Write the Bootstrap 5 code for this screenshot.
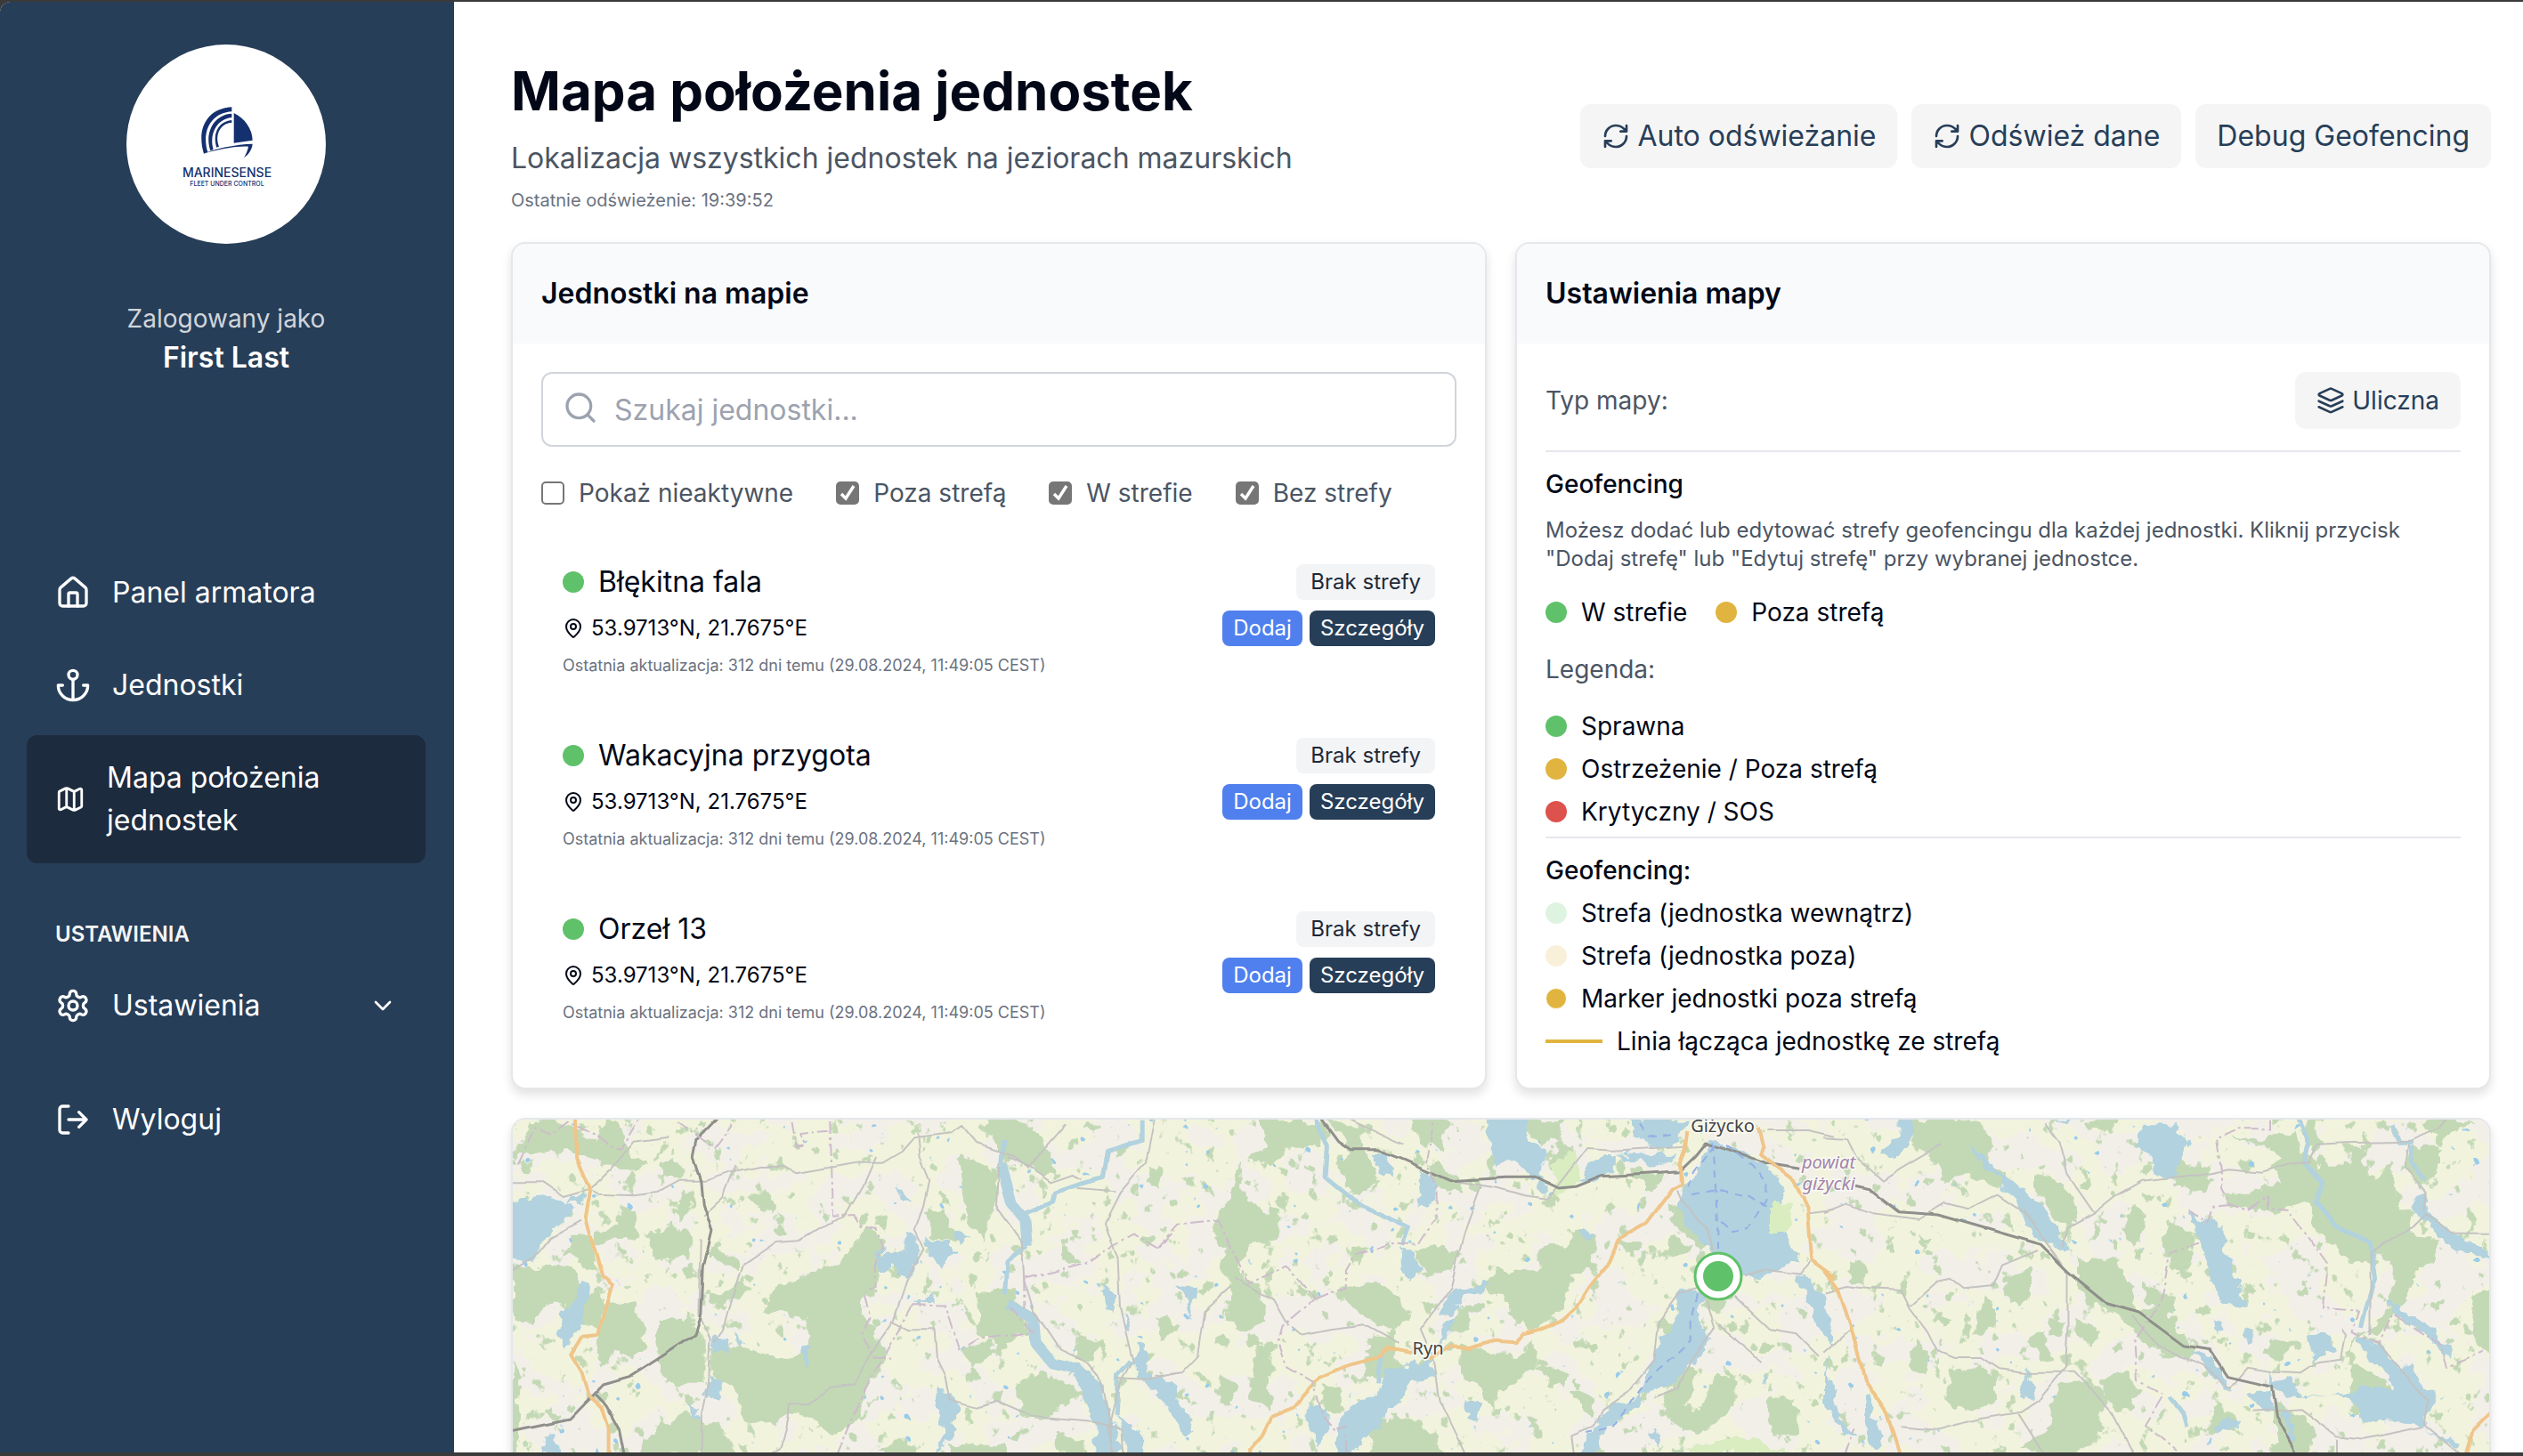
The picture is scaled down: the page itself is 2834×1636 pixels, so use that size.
<!DOCTYPE html>
<html lang="pl">
<head>
<meta charset="utf-8">
<meta name="viewport" content="width=device-width, initial-scale=1">
<title>Mapa położenia jednostek</title>
<link href="https://cdn.jsdelivr.net/npm/bootstrap@5.3.0/dist/css/bootstrap.min.css" rel="stylesheet">
<style>
:root{--navy:#273e58;--navy-dark:#1d2b3e;--ink:#020817;--slate:#4b5563;--line:#e5e7eb;--ok:#5fc169;--warn:#e0b43f;--crit:#dd524c}
html{font-size:32px}
body{font-family:Inter,"Liberation Sans",sans-serif;color:var(--ink);background:#3a3a3a;padding:2px 0 4px;height:100vh;overflow:hidden}
.app-window{height:100%;background:#fff;border-top-left-radius:12px;overflow:hidden}
svg.ico{fill:none;stroke:currentColor;stroke-width:2;stroke-linecap:round;stroke-linejoin:round;flex-shrink:0}
.side{width:510px;flex-shrink:0;background:var(--navy);color:#fff;padding:48px 32px 0 30px}
.avatar{width:224px;height:224px;margin-bottom:64px}
.fs-sm{font-size:28px;line-height:40px}
.fs-xs{font-size:24px;line-height:32px}
.muted-light{color:#d1d5db}
.side-nav{margin-top:192px}
.side-nav .nav-link{color:#fff;background:none;border:0;padding:24px 32px;border-radius:12px;gap:24px;line-height:48px;text-align:left}
.side-nav .nav-link.active{background:var(--navy-dark)}
.side-head{font-size:24px;line-height:32px;font-weight:600;padding:0 32px;margin:64px 0 16px;color:#f5f5f5}
.main-pane{padding:64px 36px 0 64px;min-width:0}
.page-title{font-size:60px;line-height:72px;font-weight:700;margin:0 0 16px}
.slate{color:var(--slate)}
.stamp{font-size:20px;line-height:30px;color:#6b7280}
.btn-soft{--bs-btn-bg:#f5f5f5;--bs-btn-color:var(--navy);--bs-btn-hover-bg:#e9e9e9;--bs-btn-border-width:0;--bs-btn-border-radius:12px;--bs-btn-padding-x:24px;--bs-btn-padding-y:12px;--bs-btn-font-size:32px;--bs-btn-line-height:48px}
.btn-soft.compact{--bs-btn-font-size:28px;--bs-btn-line-height:40px}
.panel-row{--bs-gutter-x:32px;--bs-gutter-y:32px;margin-top:0}
.panel-row > :not(:last-child){margin-top:0}
.panel{border:2px solid var(--line);border-radius:16px;box-shadow:0 6px 12px rgba(0,0,0,.12);overflow:hidden;background:#fff}
.panel-head{background:#f9fafc;padding:32px;font-size:32px;line-height:48px;font-weight:600;margin:0}
.search-ico{left:24px;top:20px;color:#9ca3af}
.search-box{height:84px;border:2px solid #d1d5db;border-radius:12px;padding:0 24px 0 80px;font-size:32px}
.search-box::placeholder{color:#9ca3af}
.filters{gap:48px}
.filters .form-check-input{width:26px;height:26px;border:2px solid #767676;border-radius:5px}
.filters .form-check-input:checked{background-color:#767676;background-size:22px 22px;background-image:url("data:image/svg+xml,%3Csvg xmlns='http://www.w3.org/2000/svg' viewBox='0 0 22 22'%3E%3Cpath d='M4 12l5 5 9-14' fill='none' stroke='white' stroke-width='3.4'/%3E%3C/svg%3E")}
.unit{padding:24px}
.unit-name{line-height:48px}
.unit-time{font-size:18px;line-height:27px;color:#6b7280}
.dot{width:24px;height:24px;border-radius:50%;flex-shrink:0;display:inline-block}
.ok{background:var(--ok)}.warn{background:var(--warn)}.crit{background:var(--crit)}
.ok-soft{background:#dff3e1}.warn-soft{background:#f9f0d9}
.ringed{border:1px solid #fff}
.link-line{width:64px;height:4px;background:var(--warn)}
.zone-tag{background:#f3f4f6;color:#1f2937;border-radius:8px;padding:4px 16px}
.btn-mini{--bs-btn-font-size:24px;--bs-btn-line-height:32px;--bs-btn-padding-x:12px;--bs-btn-padding-y:4px;--bs-btn-border-width:0;--bs-btn-border-radius:8px;--bs-btn-color:#fff;--bs-btn-hover-color:#fff}
.btn-add{--bs-btn-bg:#4f80ee;--bs-btn-hover-bg:#3b6fe0}
.btn-more{--bs-btn-bg:var(--navy);--bs-btn-hover-bg:var(--navy-dark)}
.ruled{border-top:2px solid var(--line);padding-top:16px}
.sub-title{font-weight:500}
.section-gap + .section-gap{margin-top:24px}
.map-box svg{width:100%;height:800px;display:block}
.map-box .fo{fill:#c3d9b5}.map-box .wa{fill:#b1d2de}
.map-box .lm{fill:#d9edc0}
.map-box .l path{fill:none;vector-effect:non-scaling-stroke;stroke-linejoin:round}
.map-box .l .rv{stroke:#b1d2de;stroke-width:5}.map-box .l .rw{stroke:#b1d2de;stroke-width:12}
.map-box .l .rd{stroke:#c4c3c1;stroke-width:2}.map-box .l .rl{stroke:#8f8f8b;stroke-width:3}
.map-box .l .or{stroke:#f0c589;stroke-width:4}
.map-box .l .bo{stroke:#cdbccb;stroke-width:2;stroke-dasharray:14 4 3 4}
.map-box .l .fe{stroke:#94aee6;stroke-width:2;stroke-dasharray:9 7}
.map-box text{font-family:"Noto Sans",sans-serif;font-size:20px;text-anchor:middle;stroke:#fff;stroke-width:3;stroke-opacity:.7;paint-order:stroke}
</style>
<script src="https://cdn.jsdelivr.net/npm/bootstrap@5.3.0/dist/js/bootstrap.bundle.min.js"></script>
</head>
<body>
<svg width="0" height="0" class="position-absolute" aria-hidden="true">
<symbol id="i-refresh" viewBox="0 0 24 24"><path d="M3 12a9 9 0 0 1 9-9 9.75 9.75 0 0 1 6.74 2.74L21 8M21 3v5h-5M21 12a9 9 0 0 1-9 9 9.75 9.75 0 0 1-6.74-2.74L3 16M8 16H3v5"/></symbol>
<symbol id="i-pin" viewBox="0 0 24 24"><path d="M20 10c0 4.993-5.539 10.193-7.399 11.799a1 1 0 0 1-1.202 0C9.539 20.193 4 14.993 4 10a8 8 0 0 1 16 0"/><circle cx="12" cy="10" r="3"/></symbol>
</svg>
<div class="app-window d-flex">
<aside class="side">
  <div class="text-center">
    <svg class="avatar" viewBox="0 0 224 224" role="img" aria-label="MarineSense">
      <circle cx="112" cy="112" r="112" fill="#fff"/>
      <g transform="translate(-142 -50) scale(.33333)" fill="#15306f">
        <path d="M781 361v15C712 380 678 442 700 513l-13 5C660 430 702 364 781 361z"/>
        <path d="M781 383v13C733 399 703 450 719 504l-10 4C688 446 722 386 781 383z"/>
        <path d="M781 405v8C743 416 722 454 738 494l-8 3C714 448 739 408 781 405z"/>
        <path d="M788 381c37 17 62 54 63 92l-63 9z"/>
        <path d="M688 517c52-19 112-31 163-32-2 20-13 35-29 47 8-14 13-26 15-38-48-2-98 10-149 23z"/>
      </g>
      <g fill="#15306f" text-anchor="middle" font-family="Inter,sans-serif">
        <text x="113" y="149" font-size="14" font-weight="500">MARINESENSE</text>
        <text x="113" y="159" font-size="7" font-weight="500">FLEET UNDER CONTROL</text>
      </g>
    </svg>
    <div class="fs-sm muted-light">Zalogowany jako</div>
    <div class="fw-semibold">First Last</div>
  </div>
  <nav class="side-nav nav flex-column">
    <a class="nav-link d-flex align-items-center mb-1" href="#"><svg class="ico" width="40" height="40" viewBox="0 0 24 24"><path d="M15 21v-8a1 1 0 0 0-1-1h-4a1 1 0 0 0-1 1v8"/><path d="M3 10a2 2 0 0 1 .709-1.528l7-5.999a2 2 0 0 1 2.582 0l7 5.999A2 2 0 0 1 21 10v9a2 2 0 0 1-2 2H5a2 2 0 0 1-2-2z"/></svg>Panel armatora</a>
    <a class="nav-link d-flex align-items-center mb-1" href="#"><svg class="ico" width="40" height="40" viewBox="0 0 24 24"><path d="M12 22V8M5 12H2a10 10 0 0 0 20 0h-3"/><circle cx="12" cy="5" r="3"/></svg>Jednostki</a>
    <a class="nav-link active d-flex align-items-center" href="#" aria-current="page"><svg class="ico" width="34" height="34" viewBox="0 0 24 24"><path d="M14.106 5.553a2 2 0 0 0 1.788 0l3.659-1.83A1 1 0 0 1 21 4.619v12.764a1 1 0 0 1-.553.894l-4.553 2.277a2 2 0 0 1-1.788 0l-4.212-2.106a2 2 0 0 0-1.788 0l-3.659 1.83A1 1 0 0 1 3 19.381V6.618a1 1 0 0 1 .553-.894l4.553-2.277a2 2 0 0 1 1.788 0zM15 5.764v15M9 3.236v15"/></svg>Mapa położenia jednostek</a>
    <h2 class="side-head">USTAWIENIA</h2>
    <button type="button" class="nav-link d-flex align-items-center mb-3"><svg class="ico" width="40" height="40" viewBox="0 0 24 24"><path d="M12.22 2h-.44a2 2 0 0 0-2 2v.18a2 2 0 0 1-1 1.73l-.43.25a2 2 0 0 1-2 0l-.15-.08a2 2 0 0 0-2.73.73l-.22.38a2 2 0 0 0 .73 2.73l.15.1a2 2 0 0 1 1 1.72v.51a2 2 0 0 1-1 1.74l-.15.09a2 2 0 0 0-.73 2.73l.22.38a2 2 0 0 0 2.73.73l.15-.08a2 2 0 0 1 2 0l.43.25a2 2 0 0 1 1 1.73V20a2 2 0 0 0 2 2h.44a2 2 0 0 0 2-2v-.18a2 2 0 0 1 1-1.73l.43-.25a2 2 0 0 1 2 0l.15.08a2 2 0 0 0 2.73-.73l.22-.39a2 2 0 0 0-.73-2.73l-.15-.08a2 2 0 0 1-1-1.74v-.5a2 2 0 0 1 1-1.74l.15-.09a2 2 0 0 0 .73-2.73l-.22-.38a2 2 0 0 0-2.73-.73l-.15.08a2 2 0 0 1-2 0l-.43-.25a2 2 0 0 1-1-1.73V4a2 2 0 0 0-2-2z"/><circle cx="12" cy="12" r="3"/></svg><span class="flex-grow-1">Ustawienia</span><svg class="ico" width="32" height="32" viewBox="0 0 24 24"><path d="m6 9 6 6 6-6"/></svg></button>
    <button type="button" class="nav-link d-flex align-items-center"><svg class="ico" width="40" height="40" viewBox="0 0 24 24"><path d="M9 21H5a2 2 0 0 1-2-2V5a2 2 0 0 1 2-2h4M16 17l5-5-5-5M21 12H9"/></svg>Wyloguj</button>
  </nav>
</aside>
<main class="main-pane flex-grow-1">
  <header class="d-flex justify-content-between align-items-center mb-3">
    <div>
      <h1 class="page-title">Mapa położenia jednostek</h1>
      <p class="slate mb-1">Lokalizacja wszystkich jednostek na jeziorach mazurskich</p>
      <p class="stamp mb-0">Ostatnie odświeżenie: 19:39:52</p>
    </div>
    <div class="d-flex gap-2">
      <button type="button" class="btn btn-soft d-flex align-items-center gap-1"><svg class="ico" width="32" height="32"><use href="#i-refresh"/></svg>Auto odświeżanie</button>
      <button type="button" class="btn btn-soft d-flex align-items-center gap-1"><svg class="ico" width="32" height="32"><use href="#i-refresh"/></svg>Odśwież dane</button>
      <button type="button" class="btn btn-soft">Debug Geofencing</button>
    </div>
  </header>
  <div class="row panel-row">
    <div class="col-lg-6">
      <section class="panel h-100">
        <h2 class="panel-head">Jednostki na mapie</h2>
        <div class="p-3">
          <div class="position-relative mb-3">
            <svg class="ico search-ico position-absolute" width="40" height="40" viewBox="0 0 24 24"><circle cx="11" cy="11" r="8"/><path d="m21 21-4.3-4.3"/></svg>
            <input type="search" class="form-control search-box" placeholder="Szukaj jednostki..." aria-label="Szukaj jednostki">
          </div>
          <div class="filters d-flex mb-3 fs-sm slate">
            <div class="d-flex align-items-center gap-2"><input class="form-check-input m-0" type="checkbox" id="f1"><label for="f1">Pokaż nieaktywne</label></div>
            <div class="d-flex align-items-center gap-2"><input class="form-check-input m-0" type="checkbox" id="f2" checked><label for="f2">Poza strefą</label></div>
            <div class="d-flex align-items-center gap-2"><input class="form-check-input m-0" type="checkbox" id="f3" checked><label for="f3">W strefie</label></div>
            <div class="d-flex align-items-center gap-2"><input class="form-check-input m-0" type="checkbox" id="f4" checked><label for="f4">Bez strefy</label></div>
          </div>
          <div class="d-flex flex-column gap-2">
            <article class="unit">
              <div class="d-flex align-items-center gap-2 mb-1"><span class="dot ok"></span><span class="unit-name flex-grow-1">Błękitna fala</span><span class="zone-tag fs-xs">Brak strefy</span></div>
              <div class="d-flex align-items-center gap-1 mb-1 fs-xs"><svg class="ico" width="24" height="24"><use href="#i-pin"/></svg><span class="flex-grow-1">53.9713°N, 21.7675°E</span><button type="button" class="btn btn-mini btn-add">Dodaj</button><button type="button" class="btn btn-mini btn-more">Szczegóły</button></div>
              <div class="unit-time">Ostatnia aktualizacja: 312 dni temu (29.08.2024, 11:49:05 CEST)</div>
            </article>
            <article class="unit">
              <div class="d-flex align-items-center gap-2 mb-1"><span class="dot ok"></span><span class="unit-name flex-grow-1">Wakacyjna przygota</span><span class="zone-tag fs-xs">Brak strefy</span></div>
              <div class="d-flex align-items-center gap-1 mb-1 fs-xs"><svg class="ico" width="24" height="24"><use href="#i-pin"/></svg><span class="flex-grow-1">53.9713°N, 21.7675°E</span><button type="button" class="btn btn-mini btn-add">Dodaj</button><button type="button" class="btn btn-mini btn-more">Szczegóły</button></div>
              <div class="unit-time">Ostatnia aktualizacja: 312 dni temu (29.08.2024, 11:49:05 CEST)</div>
            </article>
            <article class="unit">
              <div class="d-flex align-items-center gap-2 mb-1"><span class="dot ok"></span><span class="unit-name flex-grow-1">Orzeł 13</span><span class="zone-tag fs-xs">Brak strefy</span></div>
              <div class="d-flex align-items-center gap-1 mb-1 fs-xs"><svg class="ico" width="24" height="24"><use href="#i-pin"/></svg><span class="flex-grow-1">53.9713°N, 21.7675°E</span><button type="button" class="btn btn-mini btn-add">Dodaj</button><button type="button" class="btn btn-mini btn-more">Szczegóły</button></div>
              <div class="unit-time">Ostatnia aktualizacja: 312 dni temu (29.08.2024, 11:49:05 CEST)</div>
            </article>
          </div>
        </div>
      </section>
    </div>
    <div class="col-lg-6">
      <section class="panel h-100">
        <h2 class="panel-head">Ustawienia mapy</h2>
        <div class="p-3 fs-sm d-flex flex-column">
          <div class="d-flex justify-content-between align-items-center section-gap">
            <span class="slate">Typ mapy:</span>
            <button type="button" class="btn btn-soft compact d-flex align-items-center gap-1"><svg class="ico" width="32" height="32" viewBox="0 0 24 24"><path d="m12.83 2.18a2 2 0 0 0-1.66 0L2.6 6.08a1 1 0 0 0 0 1.83l8.58 3.91a2 2 0 0 0 1.66 0l8.58-3.9a1 1 0 0 0 0-1.83zM22 12.5l-9.17 4.16a2 2 0 0 1-1.66 0L2 12.5M22 17.5l-9.17 4.16a2 2 0 0 1-1.66 0L2 17.5"/></svg>Uliczna</button>
          </div>
          <div class="ruled section-gap">
            <h3 class="fs-sm sub-title mb-2">Geofencing</h3>
            <p class="fs-xs slate mb-0">Możesz dodać lub edytować strefy geofencingu dla każdej jednostki. Kliknij przycisk "Dodaj strefę" lub "Edytuj strefę" przy wybranej jednostce.</p>
          </div>
          <div class="d-flex gap-3 section-gap">
            <div class="d-flex align-items-center gap-2"><span class="dot ok"></span>W strefie</div>
            <div class="d-flex align-items-center gap-2"><span class="dot warn"></span>Poza strefą</div>
          </div>
          <div class="slate section-gap">Legenda:</div>
          <div class="d-flex flex-column gap-1 section-gap">
            <div class="d-flex align-items-center gap-2"><span class="dot ok"></span>Sprawna</div>
            <div class="d-flex align-items-center gap-2"><span class="dot warn"></span>Ostrzeżenie / Poza strefą</div>
            <div class="d-flex align-items-center gap-2"><span class="dot crit"></span>Krytyczny / SOS</div>
            <div class="ruled d-flex flex-column gap-1">
              <h3 class="fs-sm sub-title mb-0">Geofencing:</h3>
              <div class="d-flex align-items-center gap-2"><span class="dot ok-soft"></span>Strefa (jednostka wewnątrz)</div>
              <div class="d-flex align-items-center gap-2"><span class="dot warn-soft"></span>Strefa (jednostka poza)</div>
              <div class="d-flex align-items-center gap-2"><span class="dot warn ringed"></span>Marker jednostki poza strefą</div>
              <div class="d-flex align-items-center gap-2"><span class="link-line"></span>Linia łącząca jednostkę ze strefą</div>
            </div>
          </div>
        </div>
      </section>
    </div>
    <div class="col-12">
      <section class="panel map-box">
<svg viewBox="576 1258 2220 800" preserveAspectRatio="xMidYMin slice" role="img" aria-label="Mapa jednostek">
<defs>
<filter id="rough" x="0" y="0" width="1" height="1"><feTurbulence type="fractalNoise" baseFrequency=".06" numOctaves="3" seed="4" result="n"/><feDisplacementMap in="SourceGraphic" in2="n" scale="18" xChannelSelector="R" yChannelSelector="G"/></filter>
<filter id="wob" x="0" y="0" width="1" height="1"><feTurbulence type="fractalNoise" baseFrequency=".03" numOctaves="1" seed="9" result="n"/><feDisplacementMap in="SourceGraphic" in2="n" scale="8" xChannelSelector="R" yChannelSelector="G"/></filter>
<filter id="fields" x="0" y="0" width="1" height="1" color-interpolation-filters="sRGB"><feTurbulence type="fractalNoise" baseFrequency=".018 .022" numOctaves="4" seed="12"/><feColorMatrix values="0 0 0 0 .949  0 0 0 0 .953  0 0 0 0 .867  16 0 0 0 -7.2"/></filter>
<filter id="copses" x="0" y="0" width="1" height="1" color-interpolation-filters="sRGB"><feTurbulence type="fractalNoise" baseFrequency=".06 .05" numOctaves="4" seed="31"/><feColorMatrix values="0 0 0 0 .765  0 0 0 0 .851  0 0 0 0 .71  0 16 0 0 -10.6"/></filter>
<filter id="ponds" x="0" y="0" width="1" height="1" color-interpolation-filters="sRGB"><feTurbulence type="fractalNoise" baseFrequency=".08" numOctaves="2" seed="77"/><feColorMatrix values="0 0 0 0 .6  0 0 0 0 .8  0 0 0 0 .92  0 0 24 0 -18.6"/></filter>
</defs>
<rect x="576" y="1258" width="2220" height="800" fill="#f2efe9"/>
<rect x="576" y="1258" width="2220" height="400" filter="url(#fields)"/>
<rect x="576" y="1258" width="2220" height="400" filter="url(#copses)"/>
<rect x="576" y="1258" width="2220" height="400" filter="url(#ponds)"/>
<g filter="url(#rough)">
<rect x="556" y="1238" width="2260" height="440" fill="none"/>
<g class="fo" transform="translate(560 1220) scale(.4847 .33333)">
<path d="M35 240L70 130 120 115 180 150 230 190 240 110 275 115 295 190 300 230 345 265 320 285 240 258 180 225 120 215 60 228zM370 270l35-25 30 45-15 22-40-12zM340 505l60-35 48 30-8 65-40 28-42-20zM220 500l60-30 5-65 28 15 10 85-50 12-53 18zM172 500h32l28 120-40-15-22-45zM30 600l60 20 40-25 50 25 12 80 50-10v110l-60 5-35-70-40 5-20 55-55 5zM250 740l68-15 24 155-28 38-45-28-22 65-22-75zM370 785l70 5 42 60v155l-80-2-37-45zM610 765l30-85 60-40 60-30 60-60 40-80 32 68-20 162-32 25 12 80 50 90-40 110-30 110-50 60-60-60-30-10-50 30-70 2-20-102-62-65v-85l72-10 60 42 72 5 32-80-30-70zM325 1240l20-50 85-85 90 45 25 90zM495 545l60 45-5 25-55-35zM568 372l52-15 32 45-10 35-60-45zM405 420l25-75 17 75-25 48zM1120 100l60 0 82 62 30 130-30 10-72-50-22-10-20-60zM1065 225l45 45 52 20-10 110-30 130-42-110zM988 430l42-12 32 95-62-8zM1098 700l92-22 42 155-72 30-52-20 12-63zM1075 885l65-28 12 45-52 42zM1208 992l52-20 82 58-12 42-70 42-52-12zM1340 830l50 38-8 64-37-10zM1508 265l34 25-12 55-26-12zM1050 1205l130 5v40h-130zM880 1240l60-55 25 55zM486 705l60-20 20-50 12 60-60 50-35-10zM30 930l20 60-5 250-20 0zM1300 1170l60 30-5 40-60-5zM1360 120l35 20-18 25-20-20zM1310 530l40 60-40 10z"/></g>
<g class="fo" transform="translate(1300 1220) scale(.4847 .33333)">
<path d="M235 110l155 15-15 80-70 20-40 40-55-15 40-60zM385 110l60 20 40 90 25 90-30 60-50-30-10-60 30-60-30-60zM590 110l80 0-10 110-55-30zM190 240l10 130 60 60-5-60 35 90-10 50-50 20-40 60 10 80-40-20-10-100-30-60 55-120zM170 650l70 30 10 120-50 20-40-30 10-80zM650 250l40 60 20 50-60-20-30-70zM840 115l100 0-10 60-40 30zM930 170l40 90-30 50-30-40zM1090 280l90 20-40 50-20-20zM600 560l40-20 60 20-20 60-70 0zM880 555l70-30 30-40 40 20-10 100-50 30-20 110-60 80-50-40-20-60-50-40 30-80 50 30 40-10zM1180 400l40 20 60 110-20 20-60-90zM1070 510l50 20-10 50-30-30zM1180 500l60 40-20 30-45-20zM430 680l80-20 60 60 15 70-40 45-60-60-60-60zM490 850l60-20 10 150-80 10 0-60zM700 870l50 20 90 20 30-40 0 80-40 60-40 10-10 80-40-80-40-50zM690 740l40 0-10 80-35 10zM380 1010l40-10 10 90-20 25-30-30zM150 960l30 60-10 60-35-30zM230 870l40 0-10 220-45-30zM500 1130l60-20 80 50 30 90-180 0zM960 1020l55 30-5 70-50-60zM1290 970l50 20 0 80-50 60-40 60-60-60 0-60 70 20zM1420 1040l60 20 10 100-50 30-25-60zM1210 940l40 20-10 100-60 70-10-50zM1395 850l40 30-20 30-20-20zM450 540l40 10-40 60zM890 930l60 50-10 30-70-60zM1170 780l50 10 20 60-70-20zM1260 700l60 30-20 40-40-30zM0 780l50 20-40 60z"/></g>
<g class="fo" transform="translate(2050 1220) scale(.5 .33333)">
<path d="M200 110l150 10 25 70-10 70 45 40-20 40-70-30-45 10-40-80-45-60zM470 290l60 30 40 110-20 60-30-40-50-110zM580 115l75 5-10 30-60-5zM570 580l90 10 30 90-10 60 60 20-30-100 70 50-10 60 60 130-10 30-70-30-60-80-40-60-60-20-20-60zM670 480l25-70 20 30-5 100-40-20zM750 500l50-30 30 40-10 60 10 40-50 10-20-60zM790 260l75 10-10 90-75-30zM905 350l60 0 60-20-20-70 80-40 20 60 60 60-20 60-80 0-40 20-60 10-60-20zM920 170l60 10 80-30 10 80-40 30-40-60-50-10zM1090 110l30 80-20 30-30-80zM1120 260l60 0-20-60 60 0-10 60 20 60 40-70 20 150 30 20-10 100-60 40-20 50-60-30-60-80-30-100 20-60zM1320 200l60 0 0 80-40 60-30-70zM1240 520l60-20 80 20-10 80-50 40-10 80-40 60-30 60-50-10-10 100 80 60 40 60 20 60-70-20-60 20-10-100-10-100 40-80 60-100 10-100zM1460 700l40-20v240l-50-70zM1340 110l120 10-80 60zM280 960l60-20 50 30 0 90-60 40-60-40zM520 1010l60-20 50 50-15 150-70 60-60-10-40-30 60-60zM620 990l60-20 30 60-30 70-50-30zM200 860l30 30-5 90-40-40zM400 640l60-20 0 80-40 50zM360 720l30 20-20 80-40 20zM460 850l30-20 25 90-30 10zM560 780l60 50-20 50-35-40zM505 790l35 10-10 50-30-10zM60 590l30 30-5 40-30 0zM210 505l25 5-10 50zM1000 860l50 0-20 60-45-10zM1010 1080l70 20 20 80-10 70-90 0 10-60zM880 1070l40 60-60 40zM245 770l40 10-20 30z"/></g>
<g class="wa" transform="translate(560 1220) scale(.4847 .33333)">
<path d="M20 390l110-18 42 48-52 80-40 92-60-8zM150 400l52-42-10 40zM178 695l22-35 17 40-25 100-40 88-18-58zM500 845l32 15 5 35-42 5zM492 985l30 5-12 72-32-22zM430 1078l34 14 8 42zM103 1175l34-5v75h-34zM878 560l62-10 5-60 28 30 2 52-25 82-40-42-32 0zM988 512h56v60l-18 42-26-52zM1050 498l38 6-18 28zM928 335l30 58-22-8zM698 878l28 2-10 76zM1012 1005l25 15 30 60-20 50 5 60-40 50 20-75zM1398 685l32 15 2 75-22-22zM1453 760l20 45-10 20zM1478 860l32 40-8 68 70 50v60l-40-30-50-70zM1436 1115l58 55v75h-36zM1340 935l55 75 28 120 20 110h-62l0-110-40-125zM960 735l40-15 10-30 0 45zM548 838l20 20-12 20z"/></g>
<g class="wa" transform="translate(1300 1220) scale(.4847 .33333)">
<path d="M765 105l85 0 10 80 45 40-25 80 30 50-15 20-25-60-45-60-45 10-15-80zM500 220l35 30 15 60-35-10zM605 290l45 20-5 70-40 30 5-60zM1010 240l50 0 0 50-60 30-25-5zM1095 110l130 0-15 80-60 20-40-50zM1060 230l140 0-10 25-60 10zM1280 190l70 30 60 40 35 60 10 50-25 50-10 60 35 20 30 90-65 45-60 10-72-15-15-90-40-60-22-50 5-80 25-60zM980 480l35 20-20 20-20-15zM565 540l30 30 15 60-25 40-15-50zM680 690l95-25-20 30-50 20-30 60-20-10zM660 810l30-30 0 40-40 60zM1210 690l55-5-15 70 10 60 25 50-40 60-50 80-70 30-30 70-70 70-20 80h-20l10-90 50-70 70-60 30-100 20-90 30-20zM600 930l40 0-5 60-50 10-20 60-40 40-10 50-40 40-30 60h-30l10-150 50-30 40-40 10-70zM350 1075l35 10 10 90-25 40-20-60zM715 1060l30 10-5 60-25-20zM0 980l40 50 50 140-20 10-60-120zM45 670l40 10-5 120-12-70zM1480 640l40 10 50 160v80l-30-60-40-130zM1140 1150l30 20-20 50zM1400 960l20 20-10 50z"/></g>
<g class="wa" transform="translate(2050 1220) scale(.5 .33333)">
<path d="M165 105l35 0-5 60-30 70-35-10 35-70zM318 205l50 50 30 60 50 30 50 80 45 110-15 20-60-60-40-110-50-80zM720 130l60 0 40 70-20 60-20 50-40-10-5-60-32-40zM815 415l20 30 60 30 0 70 20 80 30 100-5 30-50-30-30-100-20-100zM1320 380l20-20 25 80 60 70 70 50v25l-80-20-50-90-45-50zM1265 730l30 20 60 60 50 60-5 60-20-60-60-60-50-40zM1195 845l55 40 60 70 60 80-10 50-20 70-50-20-90-10 0-60-70-20-90 10-50-80 60 20 20 50 100 0 40-40 80 20-60-90zM820 895l50 10 30 90 10 30-40-40zM950 1040l50-20 20 80-30 0zM1030 1090l20 10 10 100-20-20zM1090 840l40 0 15 50-50 40zM940 815l25 10-15 45-10-20zM880 1130l55 0-10 25-45 5zM450 960l15 40 5 50-30-10zM85 1040l20 0 5 70 20 60-10 50h-25zM0 740l20 80-5 50zM0 920l30 180 40 80-20 10-50-110zM875 780l15 30-10 15zM1345 1150l80 60-5 20zM520 110h50l-20 20z"/></g>
<path class="lm" d="M1740 1310l30-15 5 30-25 20zM1990 1350l24 5-10 30-14 0zM1890 1632l60-20 60 20z"/>
</g>
<g class="l" filter="url(#wob)">
<g transform="translate(560 1220) scale(.4847 .33333)">
<path class="rw" d="M1165 265L1190 400 1220 450 1225 540"/><path class="rv" d="M1170 180l-5 85M1225 540l-45 50-5 110"/><path class="rw" d="M1180 735l60 50 5 80 40 70 60 20"/>
<path class="rv" d="M1490 110v75l-80 35-10 90-50 20-60 30-5 30-65 40M1465 930l-30 50-5 130"/>
<path class="rd" d="M30 325h70l50 50 60-25 20 15 80 5 60-10 50-40h60l60-30 70-20h50l30 25 60-15 80-20h60l40-35 30-50 90-15 25-25 35 60 80 40 35 45 90-150M1180 240l60 45 40 40 50-25 20 15M970 160l5 80 22 80-12 80-20 90 20 60-40 110-30 130-30 60-30 70-30 90-60 10-50 55h-40l-10 80-15 70-30 25M875 240l-30 100-40 100-60 35-50 45-50 5-80 80-25 110-20 110-20 40M30 620l50-40 40-70 70-55M550 270l-30 110-45 60M215 345l50-70 50-90 80-15M470 520l-5 250 25 80-5 150-15 110v140M910 790l40 30h60l5 100 20 60 10 80 60 25 50-20 80 50 150 20 60 25 5 100M1160 260l-5 150 60 120 5 130 20 100 60 130 60 40 35 60 20 150 10 120M1520 110l-20 150-60 100-35 100 30 120 5 170 30 180-40 110-20 120 20 90M1340 345l90 10M1435 990l60 5 80-25"/>
<path class="rl" d="M510 105l-50 75-8 60 18 80 5 80 20 90-20 120-5 160-15 70-90 85-60 55-60 25-80 120-130 40M225 1040l20 30 35 90 12 90"/>
<path class="or" d="M177 105l5 140 30 100-12 100 25 120 15 80 25 30-30 130-5 35-35 5-25 60 25 60 15 80 30 40 15 70v100"/>
<path class="bo" d="M45 262l40-120 35 25 40-45 60 40 40 45 25 5 45-110M415 120l85 90 40-80M680 120l10 90 20-5-10-40 65-10M768 120l8 320 50-5 10 35 35 10 20 60-15 70v70l-30 20 15 80-20 60 30 80h40M960 735l75 5 35 150 40-35 130-25-60-90M960 735l-60 160-70 190-45 160M1220 650v100M1220 650l140-50 60-60 50-40 60 50 40-60"/>
</g>
<g transform="translate(1300 1220) scale(.4847 .33333)">
<path class="rv" d="M370 110l25 90-5 110 50 60 70 60 75 50-15 60M520 900l-5 100"/>
<path class="rd" d="M440 110l130 90M690 320l100 25 60 25 55 10 90-170 60 5 170-15M750 340l-40 160-30 180-70 140 15 50M1205 350l10 40 60 90 10 80M1250 680l-40 20-50 100-10 120-60 110-60 60-20 60-50 30 5 60M1270 720l20 100-50 100-30 100-60 30M1360 640l50-20 80 15 25-40M1340 710l80 110 60 15 55 80M1300 810l100 120M640 920l15 140 60 180M560 870l-80-65-80 15-70 20-20-25M180 650l60 50 30 20 35 90M170 680l-60 80-15 150-40 60-60 10M1410 150h100l60 20M1510 430l60-10"/>
<path class="rl" d="M380 105l40 80 30 30h60l60 35 110 70 130-10h70l50 35 40-5 60-35 80-5 100-10 35-50 25-45 50 20 90 45 80 20"/>
<path class="or" d="M1230 150l-5 60-12 50 2 70-20 15-65 125-60 50-20 70-50 90-30 70-30 40-50 30-40 15-20 30-50-5-60 25-40-5-50 45M590 900l-60-15-15 30-70 25-70 45-60 100-50 30-20 60-30 50v30M1390 140l12 70-5 20 80 90 30 90 10 180 55 60"/>
<path class="bo" d="M0 550l50-80 90-15 70 210 90-60 65 115-75 90-10 50 20 90 60 50 20 110 30 50 30-10-10 150M370 720l65-40v-60l20-50 80-40 70 10 40-90V330l-20-70 15-140"/>
<path class="fe" d="M1285 190l10 180 5 180M1320 200l60 70 30 60v60l-40 90-40 10-30-40M1240 370l70-20 60 20 40 40M1290 200l-50 90-10 50M1250 700l-15 100 0 60-100 130-80 160-60 20M1120 130l20 40 50-10"/>
</g>
<g transform="translate(2050 1220) scale(.5 .33333)">
<path class="rv" d="M1060 110l25 80-10 70 40 70-10 60 40 80 80 60 10 120-20 100-10 60M775 1050l25 50 10 50M1275 130l15 60h30M1315 200l5 60 30 60"/>
<path class="rd" d="M0 175l50 5 20 60 60 80 40-40 90-80M0 430l50-30 60 30 100 20 60-55 50 20 65-50 60 60 60 120 30 60M495 130l30 60 20 110 60 130M535 550l10-70 60-50 50-60 60-50 60-10 60-10 70-20 80 10 60-30h40l20-65 60-5 150-5 60-40 30-50M1310 195l-5 80 45 80-5 60M0 695l50-20 50 10 70 5 20 60 40 80 20 60 40 25h60l40 40 60 10h110l25 40 60 100 50 140M190 740l60-80 30-10 30 35 70-10 20-70 80-50M545 620v200l-5 130-60 110-40 40-80 20-60 20-50 20-80-10M430 1100l60 140M690 780l60 100 100 60 60 80 40-70 60 15 60 5 40-40 50-10 10-80-10-20M960 1100l110-10 80 90 60 10 130-40M1150 1190v60M1230 560l30-40 50-30 40-60 60 70h90M1225 560v280M1235 860l120 200-10 80 90 110M0 900l60-80"/>
<path class="rl" d="M70 340l30 10 65 75 90 10 230 100 60 90 90 110 70 30 100 110 60 15 40 90 100 35 10 100 50 140"/>
<path class="or" d="M0 625l30 60 40 190 20 120 50 110 30 140M1495 1100l-40 60-15 80"/>
<path class="bo" d="M1000 110v35h-70l-50 30 10 110 0 60 20 60 40 20 40-50 0 40 50 5 90 180-10 150 80 8-15 70 60 40 30-100 60 60 50 50 15 70 80-50M910 405l-40 5-10 50-45-40M840 530l-65 30-20 170-60 130 5 130 60 50-40 100 70 90M45 1240l20-90"/>
</g>
</g>
<g>
<text x="1935" y="1272" fill="#444">Giżycko</text>
<text x="1604" y="1522" fill="#444">Ryn</text>
<text x="2054" y="1313" fill="#a283a8" font-style="italic">powiat</text>
<text x="2054" y="1337" fill="#a283a8" font-style="italic">giżycki</text>
</g>
<circle cx="1930" cy="1434" r="26" fill="#fff" stroke="#5fc169" stroke-width="3"/><circle cx="1930" cy="1434" r="17" fill="#5fc169"/>
</svg>
      </section>
    </div>
  </div>
</main>
</div>
</body>
</html>
